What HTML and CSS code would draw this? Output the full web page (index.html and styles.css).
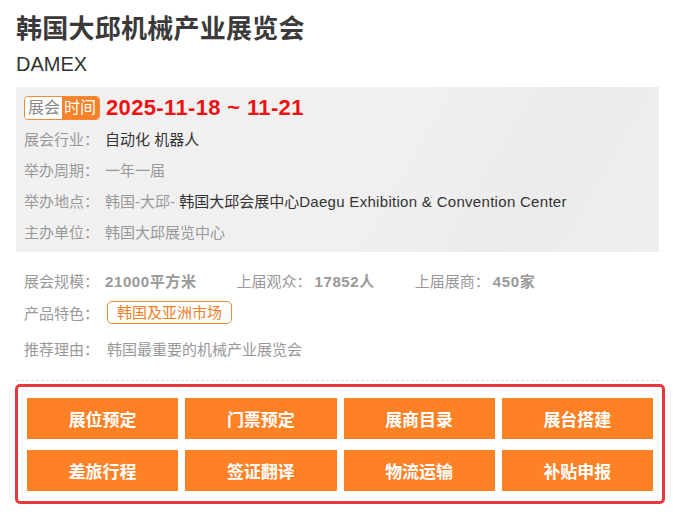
FILE: index.html
```html
<!DOCTYPE html>
<html lang="zh-CN">
<head>
<meta charset="utf-8">
<title>韩国大邱机械产业展览会</title>
<link rel="stylesheet" href="styles.css">
</head>
<body>
<div class="page">
  <h1 class="title">韩国大邱机械产业展览会</h1>
  <div class="subtitle">DAMEX</div>

  <div class="infobox">
    <div class="date-row">
      <span class="badge"><span class="badge-a">展会</span><span class="badge-b">时间</span></span>
      <span class="date">2025-11-18 ~ 11-21</span>
    </div>
    <div class="row"><span class="lbl">展会行业：</span><span class="val dark">自动化 机器人</span></div>
    <div class="row"><span class="lbl">举办周期：</span><span class="val">一年一届</span></div>
    <div class="row"><span class="lbl">举办地点：</span><span class="val">韩国-大邱- <span class="dark">韩国大邱会展中心<span class="latin">Daegu Exhibition &amp; Convention Center</span></span></span></div>
    <div class="row"><span class="lbl">主办单位：</span><span class="val">韩国大邱展览中心</span></div>
  </div>

  <div class="extra">
    <div class="row stats">
      <span class="stat"><span class="lbl">展会规模：</span><b class="num">21000平方米</b></span>
      <span class="stat"><span class="lbl slbl">上届观众：</span><b class="num">17852人</b></span>
      <span class="stat"><span class="lbl slbl">上届展商：</span><b class="num">450家</b></span>
    </div>
    <div class="row"><span class="lbl">产品特色：</span><span class="tag">韩国及亚洲市场</span></div>
    <div class="row reason"><span class="lbl">推荐理由：</span><span class="val">韩国最重要的机械产业展览会</span></div>
  </div>

  <div class="divider"></div>

  <div class="services">
    <a class="btn">展位预定</a>
    <a class="btn">门票预定</a>
    <a class="btn">展商目录</a>
    <a class="btn">展台搭建</a>
    <a class="btn">差旅行程</a>
    <a class="btn">签证翻译</a>
    <a class="btn">物流运输</a>
    <a class="btn">补贴申报</a>
  </div>
</div>
</body>
</html>
```

FILE: styles.css
```css
html, body {
  margin: 0;
  padding: 0;
  background: #ffffff;
}
body {
  font-family: "Liberation Sans", "Noto Sans CJK SC", sans-serif;
  color: #333333;
}
.page {
  padding: 12px 14px 0 16px;
}
.title {
  margin: 0;
  font-size: 26px;
  line-height: 34px;
  font-weight: bold;
  letter-spacing: 0.25px;
  color: #3a3a3a;
}
.subtitle {
  margin-top: 5px;
  font-size: 20px;
  line-height: 26px;
  color: #333333;
}
.infobox {
  margin-top: 10px;
  padding: 6px 8px 5px 8px;
  background: linear-gradient(120deg, #f1f1f1 0%, #f0f0f0 55%, #ececec 75%, #eeeeee 100%);
}
.date-row {
  display: flex;
  align-items: center;
  height: 30px;
}
.badge {
  display: inline-flex;
  border: 1px solid #f5893a;
  border-radius: 4px;
  overflow: hidden;
  font-size: 16px;
  line-height: 22px;
}
.badge-a {
  background: #ffffff;
  color: #888888;
  padding: 0 2px 0 3px;
}
.badge-b {
  background: #f7822a;
  color: #ffffff;
  padding: 0 3px 0 2px;
}
.date {
  margin-left: 6px;
  font-size: 22px;
  font-weight: bold;
  letter-spacing: 0.35px;
  color: #ee1111;
  line-height: 26px;
}
.row {
  display: flex;
  align-items: center;
  height: 31px;
  font-size: 15px;
  color: #999999;
}
.lbl {
  width: 81px;
  flex: none;
  color: #999999;
}
.val {
  color: #999999;
}
.dark {
  color: #333333;
}
.latin {
  letter-spacing: 0.3px;
}
.extra {
  margin-top: 12px;
  padding-left: 8px;
}
.extra .row {
  height: 32px;
}
.extra .reason {
  margin-top: 4px;
}
.stat {
  display: inline-flex;
  align-items: center;
  margin-right: 40px;
}
.slbl {
  width: 78px;
}
.num {
  font-weight: bold;
  letter-spacing: 0.6px;
  color: #999999;
}
.tag {
  margin-left: 2px;
  height: 21px;
  line-height: 21px;
  padding: 0 9px;
  border: 1px solid #f08a3c;
  border-radius: 5px;
  color: #f07d28;
}
.reason .val {
  margin-left: 2px;
}
.divider {
  margin-top: 16px;
  border-top: 1px dashed #dddddd;
}
.services {
  margin: 3px -6px 0 -1px;
  border: 3px solid #e8383d;
  border-radius: 5px;
  padding: 11px 9px 10px 9px;
  display: grid;
  grid-template-columns: repeat(4, 1fr);
  column-gap: 7px;
  row-gap: 11px;
}
.btn {
  display: flex;
  align-items: center;
  justify-content: center;
  height: 41px;
  background: #ff8125;
  color: #ffffff;
  font-size: 17px;
  font-weight: bold;
}
```
